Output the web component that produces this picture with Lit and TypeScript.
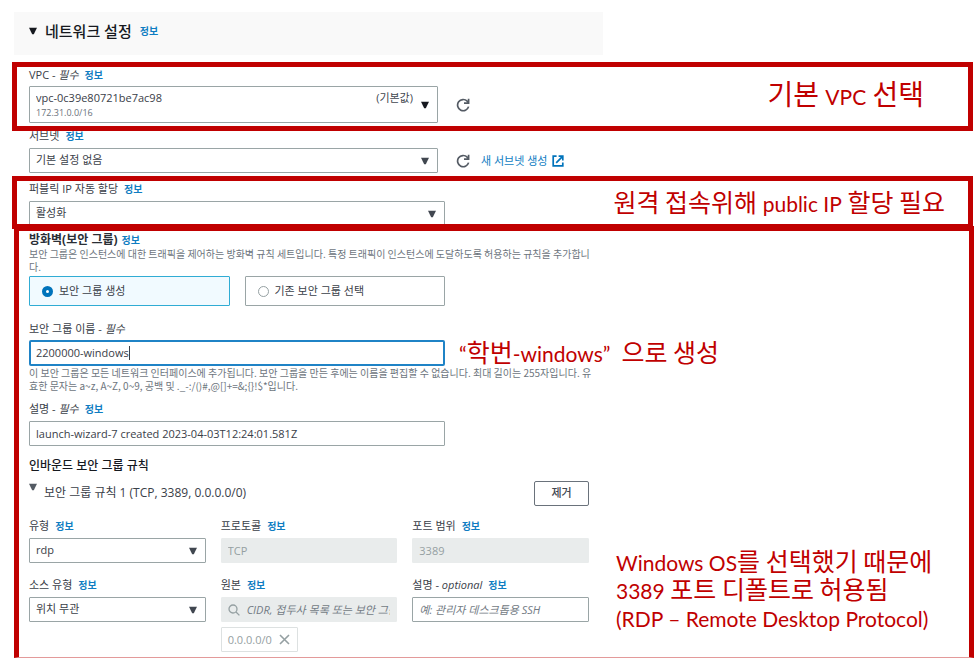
import { LitElement, html, css, svg, nothing } from "lit";
import { customElement } from "lit/decorators.js";

const refreshIcon = svg`<svg class="icon" width="14" height="14" viewBox="0 0 14 14" fill="none" stroke="#545b64" stroke-width="1.7" aria-hidden="true"><path d="M12.6 8.6A5.6 5.6 0 1 1 11.2 3.2L12.4 4.6"/><path d="M12.6 .8V5.2H8"/></svg>`;
const externalIcon = svg`<svg class="icon" width="12" height="12" viewBox="0 0 12 12" fill="none" stroke="#0073bb" stroke-width="1.7" aria-hidden="true"><path d="M4.6 1.2H1.2V10.8H10.8V7.4"/><path d="M6.6 1.2H10.8V5.4M10.6 1.4L4.2 7.8"/></svg>`;
const searchIcon = svg`<svg class="icon" width="12" height="12" viewBox="0 0 12 12" fill="none" stroke="#95a0a2" stroke-width="1.3" aria-hidden="true"><circle cx="5" cy="5" r="4"/><path d="M8 8L11.4 11.4"/></svg>`;
const closeIcon = svg`<svg class="icon" width="11" height="11" viewBox="0 0 11 11" fill="none" stroke="#95a0a2" stroke-width="1.6" aria-hidden="true"><path d="M1 1L10 10M10 1L1 10"/></svg>`;
const triangle = () =>
  svg`<svg class="icon" width="8" height="8" viewBox="0 0 8 8" aria-hidden="true"><path d="M0 .8H8L4.8 7.2H3.2Z" fill="currentColor"/></svg>`;

@customElement("app-root")
export class AppRoot extends LitElement {
  static styles = css`
    :host {
      display: block;
      background: #fff;
      color: #3a4048;
      font: 11px/16px "Open Sans", "Noto Sans CJK KR", sans-serif;
    }
    * {
      box-sizing: border-box;
    }
    main {
      display: flow-root;
    }
    h2,
    h3,
    p {
      margin: 0;
    }
    .icon {
      display: block;
      flex: none;
    }
    .header {
      display: flex;
      align-items: center;
      gap: 8px;
      max-width: 589px;
      height: 43px;
      margin: 12px 14px 7px;
      padding: 0 15px 6px;
      background: #f9f9f9;
      color: #16191f;
    }
    .header h2 {
      font-size: 15px;
      line-height: 20px;
      font-weight: 500;
    }
    .info {
      color: #0f7dc2;
      font-size: 10px;
      font-weight: 700;
      text-decoration: none;
    }
    .frame {
      position: relative;
      border: 5px solid #c00000;
    }
    .row {
      display: flex;
      justify-content: space-between;
      margin: 0 1px 0 12px;
      padding-left: 12px;
    }
    .vpc {
      padding-right: 44px;
      padding-bottom: 3px;
    }
    .public {
      padding-right: 23px;
      overflow: hidden;
      margin-top: 3px;
    }
    .public .control {
      margin-bottom: -2px;
    }
    .subnet {
      margin: -3px 29px 0;
    }
    .firewall {
      margin: -3px 0 0 14px;
      padding: 1px 12px 5px 10px;
      border-bottom: 1px solid #e39a9a;
    }
    .label {
      display: flex;
      gap: 6px;
      height: 16px;
      margin-bottom: 4px;
      white-space: nowrap;
    }
    .tight .label {
      margin-bottom: 3px;
    }
    .label.title {
      gap: 4px;
      height: 15px;
      margin-bottom: 0;
    }
    .title b {
      font-weight: 700;
      color: #2a2f36;
    }
    .title b,
    .subhead {
      font-size: 12px;
      line-height: 16px;
    }
    .line {
      display: flex;
      align-items: center;
    }
    .control {
      display: grid;
      align-items: center;
      position: relative;
      color: #414750;
    }
    .control > * {
      grid-area: 1 / 1;
    }
    .narrow {
      width: 409px;
    }
    .wide {
      width: 416px;
    }
    select,
    input[type="text"] {
      width: 100%;
      height: 25px;
      margin: 0;
      padding: 0 6px 1px;
      border: 1px solid #9aa5a6;
      border-radius: 1px;
      background: #fff;
      color: #3a4048;
      font: inherit;
      appearance: none;
      outline: none;
      text-overflow: clip;
    }
    .tall select {
      height: 37px;
      padding: 0 6px 13px;
    }
    .control > .arrow {
      justify-self: end;
      padding-right: 9px;
      pointer-events: none;
    }
    .tall > .arrow {
      color: #16191f;
    }
    .tall > .sub {
      align-self: end;
      padding: 0 7px 2px;
      font-size: 9px;
      color: #6a727b;
      pointer-events: none;
    }
    .tall > .default {
      align-self: start;
      justify-self: end;
      padding: 4px 25px 0 0;
      pointer-events: none;
    }
    input[type="text"]:disabled {
      background: #e9ecec;
      border-color: #e9ecec;
      color: #95a0a2;
    }
    input::placeholder {
      color: #737b84;
      font-style: italic;
      opacity: 1;
    }
    .control > .glass {
      padding-left: 7px;
    }
    .search input[type="text"] {
      padding-left: 25px;
    }
    .active input[type="text"] {
      height: 26px;
      border: 2px solid #1f83c6;
      padding: 0 5px 1px;
      border-radius: 2px;
    }
    .caret {
      width: 1px;
      height: 14px;
      margin-left: 100px;
      background: #3a4048;
    }
    .icon-button {
      margin: 0 0 0 18px;
      padding: 0;
      border: 0;
      background: none;
    }
    .create {
      display: flex;
      align-items: center;
      gap: 5px;
      margin-left: 11px;
      color: #0f7dc2;
      text-decoration: none;
    }
    .help {
      font-family: "Noto Sans CJK KR", sans-serif;
      font-size: 10px;
      line-height: 13px;
      color: #6d757d;
      white-space: nowrap;
    }
    .tiles {
      display: grid;
      grid-template-columns: 1fr 1fr;
      gap: 15px;
      margin: 3px 0 15px;
      padding: 0;
      border: 0;
    }
    .tile {
      display: flex;
      align-items: center;
      gap: 6px;
      height: 30px;
      padding: 0 12px;
      border: 1px solid #9aa5a6;
      border-radius: 1px;
    }
    .tile.selected {
      background: #f1faff;
      border-color: #30acd4;
    }
    input[type="radio"] {
      appearance: none;
      width: 11px;
      height: 11px;
      margin: 0;
      border: 1px solid #95a0a2;
      border-radius: 50%;
      background: #fff;
    }
    input[type="radio"]:checked {
      border: 4px solid #0073bb;
    }
    .section {
      margin-top: 9px;
    }
    .subhead {
      margin-top: 12px;
      font-weight: 500;
      color: #16191f;
    }
    .rule {
      display: flex;
      align-items: center;
      gap: 7px;
      max-width: 560px;
      margin: 7px 0 12px;
    }
    .rule .icon {
      align-self: flex-start;
      margin-top: 2px;
      color: #545b64;
    }
    .rule h3 {
      flex: 1;
      padding-bottom: 2px;
      font-size: 12px;
      line-height: 16px;
      font-weight: 400;
    }
    .remove {
      width: 55px;
      height: 25px;
      padding: 0 0 1px;
      border: 1px solid #6a727b;
      border-radius: 2px;
      background: #fff;
      color: #414750;
      font: inherit;
      font-weight: 500;
    }
    .bottom {
      display: flex;
      gap: 27px;
    }
    .fields {
      display: grid;
      grid-template-columns: repeat(3, 1fr);
      gap: 14px 15px;
      flex: 0 1 560px;
    }
    .chip {
      display: flex;
      align-items: center;
      justify-content: space-between;
      width: 77px;
      height: 25px;
      margin-top: 5px;
      padding: 0 7px 0 6px;
      border: 1px solid #dde1e1;
      border-radius: 1px;
      color: #95a0a2;
    }
    .chip button {
      padding: 0;
      border: 0;
      background: none;
    }
    .note {
      color: #c00000;
      font-family: "Noto Sans CJK KR", sans-serif;
      font-size: 25px;
      line-height: 28px;
      white-space: nowrap;
    }
    .note span {
      font-family: Lato, sans-serif;
      font-size: 21px;
      line-height: 1;
    }
    .large {
      font-size: 28px;
    }
    .center {
      align-self: center;
      padding-bottom: 4px;
    }
    .beside {
      height: 26px;
      margin-left: 14px;
      line-height: 22px;
    }
    .outcome {
      margin-top: 28px;
    }
  `;

  private info() {
    return html`<a class="info" href="#info">정보</a>`;
  }

  private label(id: string, text: unknown, info = true) {
    return html`<div class="label">
      <label for=${id}>${text}</label>${info ? this.info() : nothing}
    </div>`;
  }

  private select(id: string, value: string, size = "") {
    return html`<div class="control ${size}">
      <select id=${id}><option>${value}</option></select>
      <span class="arrow">${triangle()}</span>
    </div>`;
  }

  render() {
    return html`<main>
      <div class="header">
        ${triangle()}
        <h2>네트워크 설정</h2>
        ${this.info()}
      </div>

      <section class="frame row vpc">
        <div class="tight">
          ${this.label("vpc", html`VPC - <i>필수</i>`)}
          <div class="line">
            <div class="control narrow tall">
              <select id="vpc"><option>vpc-0c39e80721be7ac98</option></select>
              <span class="sub">172.31.0.0/16</span>
              <span class="default">(기본값)</span>
              <span class="arrow">${triangle()}</span>
            </div>
            <button class="icon-button" aria-label="새로 고침">${refreshIcon}</button>
          </div>
        </div>
        <p class="note large center">기본 <span>VPC</span> 선택</p>
      </section>

      <section class="subnet">
        ${this.label("subnet", "서브넷")}
        <div class="line">
          ${this.select("subnet", "기본 설정 없음", "narrow")}
          <button class="icon-button" aria-label="새로 고침">${refreshIcon}</button>
          <a class="create" href="#subnet">새 서브넷 생성 ${externalIcon}</a>
        </div>
      </section>

      <section class="frame row public">
        <div>
          ${this.label("public-ip", "퍼블릭 IP 자동 할당")}
          ${this.select("public-ip", "활성화", "wide")}
        </div>
        <p class="note center">원격 접속위해 <span>public IP</span> 할당 필요</p>
      </section>

      <section class="frame firewall">
        <div class="label title"><b>방화벽(보안 그룹)</b>${this.info()}</div>
        <p class="help">
          보안 그룹은 인스턴스에 대한 트래픽을 제어하는 방화벽 규칙 세트입니다. 특정 트래픽이 인스턴스에 도달하도록 허용하는 규칙을 추가합니<br />다.
        </p>
        <fieldset class="tiles wide" aria-label="방화벽(보안 그룹)">
          <label class="tile selected"><input type="radio" name="group" checked />보안 그룹 생성</label>
          <label class="tile"><input type="radio" name="group" />기존 보안 그룹 선택</label>
        </fieldset>

        <div class="tight">${this.label("name", html`보안 그룹 이름 - <i>필수</i>`, false)}</div>
        <div class="line">
          <div class="control wide active">
            <input id="name" type="text" value="2200000-windows" />
            <span class="caret"></span>
          </div>
          <p class="note beside"><span>“</span>학번<span>-windows”</span>&nbsp; 으로 생성</p>
        </div>
        <p class="help">
          이 보안 그룹은 모든 네트워크 인터페이스에 추가됩니다. 보안 그룹을 만든 후에는 이름을 편집할 수 없습니다. 최대 길이는 255자입니다. 유<br />효한 문자는 a~z, A~Z, 0~9, 공백 및 ._-:/()#,@[]+=&amp;;{}!$*입니다.
        </p>

        <div class="section">
          ${this.label("description", html`설명 - <i>필수</i>`)}
          <div class="control wide">
            <input id="description" type="text" value="launch-wizard-7 created 2023-04-03T12:24:01.581Z" />
          </div>
        </div>

        <h3 class="subhead">인바운드 보안 그룹 규칙</h3>
        <div class="rule">
          ${triangle()}
          <h3>보안 그룹 규칙 1 (TCP, 3389, 0.0.0.0/0)</h3>
          <button class="remove">제거</button>
        </div>

        <div class="bottom">
          <div class="fields">
            <div>${this.label("type", "유형")}${this.select("type", "rdp")}</div>
            <div>
              ${this.label("protocol", "프로토콜")}
              <div class="control"><input id="protocol" type="text" value="TCP" disabled /></div>
            </div>
            <div>
              ${this.label("port", "포트 범위")}
              <div class="control"><input id="port" type="text" value="3389" disabled /></div>
            </div>
            <div>${this.label("source-type", "소스 유형")}${this.select("source-type", "위치 무관")}</div>
            <div>
              ${this.label("source", "원본")}
              <div class="control search">
                <input id="source" type="text" placeholder="CIDR, 접두사 목록 또는 보안 그룹" disabled />
                <span class="glass">${searchIcon}</span>
              </div>
              <div class="chip">0.0.0.0/0<button aria-label="0.0.0.0/0 제거">${closeIcon}</button></div>
            </div>
            <div>
              ${this.label("note", html`설명 - <i>optional</i>`)}
              <div class="control"><input id="note" type="text" placeholder="예: 관리자 데스크톱용 SSH" /></div>
            </div>
          </div>
          <p class="note outcome">
            <span>Windows OS</span>를 선택했기 때문에<br /><span>3389</span> 포트 디폴트로 허용됨<br /><span>(RDP – Remote Desktop Protocol)</span>
          </p>
        </div>
      </section>
    </main>`;
  }
}
